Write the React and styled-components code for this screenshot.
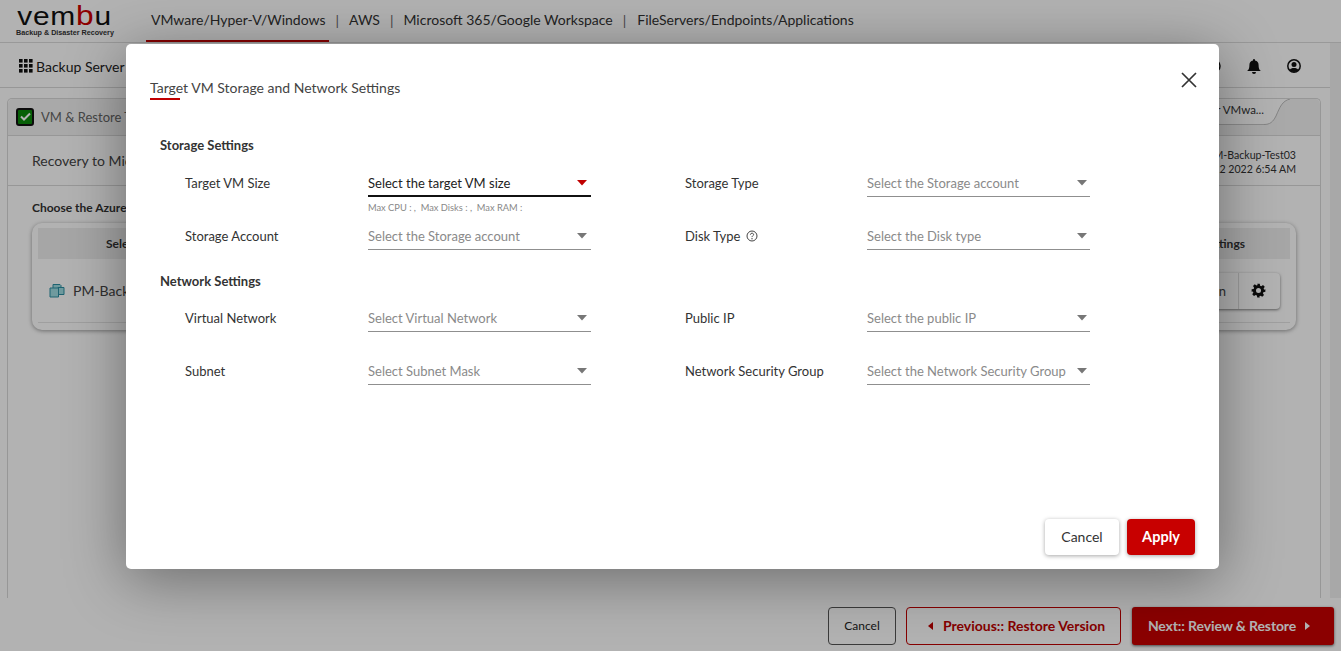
import React from "react";
import styled, { createGlobalStyle } from "styled-components";

const Global = createGlobalStyle`
  html, body { margin: 0; padding: 0; height: 100%; }
  body { font-family: Lato, "Open Sans", sans-serif; color: #333; background: #fff; overflow: hidden; }
  * { box-sizing: border-box; }
`;

const Page = styled.div`
  position: relative;
  width: 1341px;
  height: 651px;
  overflow: hidden;
  background: #fff;
  display: flex;
  flex-direction: column;
`;
const Header = styled.header`
  height: 43px;
  flex: none;
  display: flex;
  align-items: stretch;
  border-bottom: 1px solid #dcdcdc;
  padding-left: 16px;
`;
const Logo = styled.div`
  width: 130px;
  flex: none;
  display: flex;
  flex-direction: column;
`;
const LogoWord = styled.div`
  font-family: "Liberation Sans", Arial, sans-serif;
  font-weight: 400;
  font-size: 26.5px;
  line-height: 32px;
  letter-spacing: 0.7px;
  height: 28px;
  padding-left: 1px;
  color: #111;
  transform: scaleX(1.13);
  transform-origin: left center;
  span { color: #c00; font-size: 28px; }
`;
const LogoTag = styled.div`
  font-family: "Liberation Sans", sans-serif;
  font-weight: 700;
  font-size: 7.2px;
  line-height: 9px;
  color: #333;
  white-space: nowrap;
`;
const TopNav = styled.nav`
  display: flex;
  align-items: center;
  font-size: 14px;
  color: #333;
  height: 42px;
`;
const TopLink = styled.a`
  height: 42px;
  line-height: 40px;
  padding: ${(p) => (p.$active ? "0 3px 0 5px" : "0 5px")};
  white-space: nowrap;
  border-bottom: ${(p) => (p.$active ? "2px solid #c00000" : "2px solid transparent")};
`;
const Sep = styled.span`
  color: #666;
  padding: 0 ${(p) => p.$right || 5}px 0 ${(p) => p.$left || 5}px;
  margin-top: -2px;
`;
const Main = styled.div`
  height: 555px;
  flex: none;
  display: flex;
`;
const MainColumn = styled.div`
  width: 1330px;
  flex: none;
  display: flex;
  flex-direction: column;
`;
const ScrollTrack = styled.div`
  flex: 1;
  background: #f1f1f1;
`;
const SubBar = styled.div`
  height: 45px;
  flex: none;
  display: flex;
  align-items: center;
  justify-content: space-between;
  padding: 2px 29px 0 19px;
  border-bottom: 1px solid #d8d8d8;
`;
const Crumb = styled.div`
  display: flex;
  align-items: center;
  gap: 3px;
  font-size: 14px;
  color: #222;
`;
const SubIcons = styled.div`
  display: flex;
  align-items: center;
  gap: 26px;
  color: #111;
`;
const Panel = styled.section`
  margin: 10px 0 0 7px;
  width: 1314px;
  flex: 1;
  border: 1px solid #d8d8d8;
  border-bottom: none;
  border-radius: 5px 5px 0 0;
  display: flex;
  flex-direction: column;
`;
const TabRow = styled.div`
  height: 37px;
  flex: none;
  display: flex;
  align-items: center;
  justify-content: space-between;
  padding: 0 0 1px 8px;
  background: #f3f3f3;
  border-bottom: 1px solid #d8d8d8;
  border-radius: 5px 5px 0 0;
`;
const TabLabel = styled.div`
  display: flex;
  align-items: center;
  gap: 7px;
  font-size: 13px;
  color: #666;
`;
const Check = styled.span`
  width: 18px;
  height: 18px;
  border: 2px solid #111;
  border-radius: 3px;
  background: #0b8a0b;
  display: flex;
  align-items: center;
  justify-content: center;
`;
const TabEnd = styled.div`
  align-self: flex-start;
  height: 26px;
  margin-right: 30px;
  display: flex;
  align-items: flex-start;
`;
const TabText = styled.div`
  height: 26px;
  width: 110px;
  background: #fff;
  border-bottom: 1px solid #c8c8c8;
  font-size: 11.5px;
  font-weight: 400;
  line-height: 21px;
  text-align: right;
  color: #333;
  white-space: nowrap;
`;
const InfoRow = styled.div`
  height: 50px;
  flex: none;
  display: flex;
  align-items: center;
  justify-content: space-between;
  padding: 0 24px 0 24px;
  border-bottom: 1px solid #d8d8d8;
  font-size: 14px;
  color: #444;
`;
const RecoveryText = styled.span`
  margin-top: -1px;
`;
const InfoMeta = styled.div`
  font-size: 10.6px;
  line-height: 14px;
  padding-top: 3px;
  color: #333;
  text-align: right;
`;
const Content = styled.div`
  padding: 14px 24px 0;
`;
const ChooseTitle = styled.div`
  font-size: 12px;
  font-weight: 700;
  line-height: 16px;
  color: #333;
`;
const TableCard = styled.div`
  margin-top: 7px;
  height: 107px;
  width: 1264px;
  background: #fff;
  border-radius: 10px;
  box-shadow: 0 1px 4px rgba(0, 0, 0, 0.4);
  padding: 5px 6px 0;
`;
const TableHead = styled.div`
  height: 31px;
  background: #eeeeee;
  display: flex;
  align-items: center;
  justify-content: space-between;
  padding: 0 45px 0 68px;
  font-size: 12px;
  font-weight: 700;
  color: #333;
`;
const TableRow = styled.div`
  height: 64px;
  display: flex;
  align-items: center;
  justify-content: space-between;
  padding: 0 10px 0 11px;
  border-bottom: 1px solid #e4e4e4;
  font-size: 14px;
  color: #444;
`;
const RowName = styled.div`
  display: flex;
  align-items: center;
  gap: 8px;
`;
const RowActions = styled.div`
  width: 100px;
  height: 36px;
  display: flex;
  align-items: center;
  justify-content: flex-end;
  gap: 12px;
  border-radius: 4px;
  box-shadow: 0 1px 3px rgba(0, 0, 0, 0.5);
  font-size: 13px;
`;
const GearCell = styled.span`
  width: 42px;
  height: 36px;
  padding-right: 3px;
  border-left: 1px solid #ddd;
  display: flex;
  align-items: center;
  justify-content: center;
`;
const FooterBar = styled.div`
  flex: 1;
  background: #fff;
  display: flex;
  align-items: center;
  justify-content: flex-end;
  gap: 10px;
  padding: 2px 7px 0 0;
`;
const FootCancel = styled.button`
  width: 68px;
  height: 38px;
  background: transparent;
  border: 1px solid #555;
  border-radius: 4px;
  font: 400 12px Lato, sans-serif;
  color: #222;
`;
const FootPrev = styled.button`
  width: 215px;
  height: 38px;
  margin-right: 1px;
  padding: 0 0 0 6px;
  background: transparent;
  border: 1px solid #c00000;
  border-radius: 4px;
  font: 700 14px Lato, sans-serif;
  color: #c00000;
  display: flex;
  align-items: center;
  justify-content: center;
  gap: 10px;
`;
const FootNext = styled.button`
  width: 202px;
  height: 38px;
  padding: 0 8px 0 0;
  background: #c80000;
  border: none;
  border-radius: 3px;
  box-shadow: 0 1px 3px rgba(0, 0, 0, 0.6);
  font: 700 14px Lato, sans-serif;
  letter-spacing: -0.12px;
  color: #fff;
  display: flex;
  align-items: center;
  justify-content: center;
  gap: 9px;
`;
const Overlay = styled.div`
  position: absolute;
  inset: 0;
  background: rgba(0, 0, 0, 0.3);
`;
const Modal = styled.div`
  position: absolute;
  left: 126px;
  top: 44px;
  width: 1093px;
  height: 525px;
  background: #fff;
  border-radius: 5px;
  box-shadow: 0 10px 60px rgba(0, 0, 0, 0.4);
  padding: 35px 24px 14px;
  display: flex;
  flex-direction: column;
`;
const ModalHead = styled.div`
  display: flex;
  justify-content: space-between;
  align-items: flex-start;
  height: 45px;
  flex: none;
`;
const ModalTitle = styled.h2`
  margin: 0;
  font-size: 14px;
  font-weight: 400;
  line-height: 18px;
  color: #444;
  position: relative;
  &::after {
    content: "";
    position: absolute;
    left: 0;
    top: 19px;
    width: 30px;
    height: 2px;
    background: #c00000;
  }
`;
const Close = styled.button`
  background: none;
  border: none;
  padding: 0;
  margin: -9px -4px 0 0;
  width: 20px;
  height: 20px;
  color: #333;
`;
const Body = styled.div`
  flex: 1;
  padding-left: 10px;
  padding-top: 13px;
`;
const SectionTitle = styled.div`
  font-size: 13px;
  font-weight: 700;
  line-height: 17px;
  color: #333;
`;
const Grid = styled.div`
  display: grid;
  grid-template-columns: 183px 223px 94px 182px 223px;
  padding-left: 25px;
  margin-top: ${(p) => p.$top}px;
`;
const Label = styled.div`
  font-size: 13px;
  line-height: 28px;
  color: #333;
  height: ${(p) => p.$h}px;
  display: flex;
  align-items: flex-start;
  gap: 6px;
`;
const SelectWrap = styled.div`
  height: ${(p) => p.$h}px;
`;
const SelectBox = styled.div`
  height: 28px;
  display: flex;
  align-items: center;
  justify-content: space-between;
  font-size: 13px;
  color: ${(p) => (p.$active ? "#222" : "#8a8a8a")};
  border-bottom: ${(p) => (p.$active ? "2px solid #111" : "1px solid #8f8f8f")};
  padding: ${(p) => (p.$active ? "1px" : "0")} ${(p) => (p.$end ? 3 : 4)}px 0 0;
  white-space: nowrap;
  svg { flex: none; }
`;
const Hint = styled.div`
  font-size: 9.3px;
  line-height: 12px;
  margin-top: 5px;
  color: #888;
`;
const ColGap = styled.div``;
const ModalFoot = styled.div`
  display: flex;
  justify-content: flex-end;
  gap: 8px;
`;
const ModalCancel = styled.button`
  width: 74px;
  height: 36px;
  padding-bottom: 2px;
  background: #fff;
  border: none;
  border-radius: 4px;
  box-shadow: 0 1px 4px rgba(0, 0, 0, 0.35);
  font: 400 14px Lato, sans-serif;
  color: #333;
`;
const ModalApply = styled.button`
  width: 68px;
  height: 36px;
  padding-bottom: 2px;
  background: #c80000;
  border: none;
  border-radius: 4px;
  box-shadow: 0 1px 4px rgba(0, 0, 0, 0.35);
  font: 700 14.5px Lato, sans-serif;
  color: #fff;
`;

const Caret = ({ color = "#777" }) => (
  <svg width="10" height="6" viewBox="0 0 10 6"><path d="M0 0h10L5 5.500z" fill={color} /></svg>
);
const Arrow = ({ dir, color }) => (
  <svg width="5" height="8" viewBox="0 0 5 8">
    <path d={dir === "l" ? "M5 0v8L0 4z" : "M0 0v8l5-4z"} fill={color} />
  </svg>
);
const Bell = () => (
  <svg width="14" height="15" viewBox="0 0 14 15" fill="#111">
    <path d="M7 0a1 1 0 0 1 1 1v.6A4.600 4.600 0 0 1 11.600 6c0 4 1.200 5 2.200 6H.2c1-1 2.200-2 2.200-6A4.600 4.600 0 0 1 6 1.600V1a1 1 0 0 1 1-1zM5 13h4a2 2 0 0 1-4 0z" />
  </svg>
);
const User = () => (
  <svg width="14" height="14" viewBox="0 0 14 14">
    <circle cx="7" cy="7" r="6.200" fill="none" stroke="#111" strokeWidth="1.500" />
    <circle cx="7" cy="5.600" r="2.500" fill="#111" />
    <path d="M2.600 11.200C3.500 9.400 5 9 7 9s3.500.4 4.400 2.200A6 6 0 0 1 7 13a6 6 0 0 1-4.400-1.800z" fill="#111" />
  </svg>
);
const Ring = () => (
  <svg width="14" height="14" viewBox="0 0 14 14">
    <circle cx="7" cy="7" r="6" fill="none" stroke="#111" strokeWidth="1.500" />
  </svg>
);
const Apps = () => (
  <svg width="14" height="14" viewBox="0 0 14 14" fill="#111">
    {[0, 5, 10].flatMap((x) => [0, 5, 10].map((y) => <rect key={`${x}-${y}`} x={x} y={y} width="3.600" height="3.600" />))}
  </svg>
);
const Gear = () => (
  <svg width="15" height="15" viewBox="0 0 24 24" fill="#111">
    <path fillRule="evenodd" d="M10 1h4l.6 3.200 1.900.8 2.700-1.800 2.800 2.800-1.800 2.700.8 1.900L23 10v4l-3.200.6-.8 1.900 1.800 2.700-2.800 2.800-2.700-1.800-1.900.8L14 23h-4l-.6-3.200-1.900-.8-2.700 1.800-2.800-2.800 1.800-2.700-.8-1.900L1 14v-4l3.200-.6.8-1.900-1.800-2.700 2.800-2.800 2.700 1.800 1.900-.8zM12 8a4 4 0 1 0 0 8 4 4 0 0 0 0-8z" />
  </svg>
);
const VmIcon = () => (
  <svg width="16" height="15" viewBox="0 0 16 15" fill="#9fdde2" stroke="#2c8fa3" strokeWidth="1">
    <path d="M4 1.500h7l1 1v3H4z" />
    <path d="M9 4.500h6v7H9z" />
    <path d="M1 5h8.500v9H1z" />
  </svg>
);
const Help = () => (
  <svg width="12" height="12" viewBox="0 0 12 12" style={{ marginTop: 8 }}>
    <circle cx="6" cy="6" r="5" fill="none" stroke="#444" strokeWidth="1" />
    <path d="M4.400 4.700c0-2 3.200-2 3.200-.1 0 1.100-1.600 1.200-1.600 2.500" fill="none" stroke="#444" strokeWidth="1" />
    <circle cx="6" cy="8.700" r=".7" fill="#444" />
  </svg>
);
const TabCurve = () => (
  <svg width="26" height="26" viewBox="0 0 26 26" style={{ display: "block" }}>
    <path d="M0 0H26C18 2 16 8 12 17C9 23 6 25.500 0 25.500Z" fill="#fff" />
    <path d="M26 0C18 2 16 8 12 17C9 23 6 25.500 0 25.500" fill="none" stroke="#bdbdbd" />
  </svg>
);

const Select = ({ text, active, h, end }) => (
  <SelectWrap $h={h}>
    <SelectBox $active={active} $end={end}>
      <span>{text}</span>
      <Caret color={active ? "#c00000" : "#777"} />
    </SelectBox>
    {active && <Hint>Max CPU : ,&nbsp; Max Disks : ,&nbsp; Max RAM :</Hint>}
  </SelectWrap>
);

const Row = ({ h, left, leftText, right, rightText, rightHelp, active }) => (
  <>
    <Label $h={h}>{left}</Label>
    <Select text={leftText} active={active} h={h} />
    <ColGap />
    <Label $h={h}>{right}{rightHelp && <Help />}</Label>
    <Select text={rightText} h={h} end />
  </>
);

export default function App() {
  return (
    <Page>
      <Global />
      <Header>
        <Logo>
          <LogoWord>vem<span>b</span>u</LogoWord>
          <LogoTag>Backup &amp; Disaster Recovery</LogoTag>
        </Logo>
        <TopNav>
          <TopLink $active>VMware/Hyper-V/Windows</TopLink>
          <Sep $left={7}>|</Sep>
          <TopLink>AWS</TopLink>
          <Sep>|</Sep>
          <TopLink>Microsoft 365/Google Workspace</TopLink>
          <Sep $right={6}>|</Sep>
          <TopLink>FileServers/Endpoints/Applications</TopLink>
        </TopNav>
      </Header>
      <Main>
        <MainColumn>
          <SubBar>
            <Crumb><Apps />Backup Server</Crumb>
            <SubIcons><Ring /><Bell /><User /></SubIcons>
          </SubBar>
          <Panel>
            <TabRow>
              <TabLabel>
                <Check>
                  <svg width="11" height="9" viewBox="0 0 11 9"><path d="M1 4.500 4 7.500 10 1.500" fill="none" stroke="#fff" strokeWidth="2" /></svg>
                </Check>
                VM &amp; Restore Type
              </TabLabel>
              <TabEnd>
                <TabText>Recover VMwa...</TabText>
                <TabCurve />
              </TabEnd>
            </TabRow>
            <InfoRow>
              <RecoveryText>Recovery to Microsoft Azure</RecoveryText>
              <InfoMeta>PM-Backup-Test03<br />Dec 12 2022 6:54 AM</InfoMeta>
            </InfoRow>
            <Content>
              <ChooseTitle>Choose the Azure VM settings</ChooseTitle>
              <TableCard>
                <TableHead><span>Selected VM</span><span>Settings</span></TableHead>
                <TableRow>
                  <RowName><VmIcon />PM-Backup</RowName>
                  <RowActions>n<GearCell><Gear /></GearCell></RowActions>
                </TableRow>
              </TableCard>
            </Content>
          </Panel>
        </MainColumn>
        <ScrollTrack />
      </Main>
      <FooterBar>
        <FootCancel>Cancel</FootCancel>
        <FootPrev><Arrow dir="l" color="#c00000" />Previous:: Restore Version</FootPrev>
        <FootNext>Next:: Review &amp; Restore<Arrow dir="r" color="#fff" /></FootNext>
      </FooterBar>
      <Overlay>
        <Modal>
          <ModalHead>
            <ModalTitle>Target VM Storage and Network Settings</ModalTitle>
            <Close aria-label="Close">
              <svg width="20" height="20" viewBox="0 0 20 20"><path d="M3 3 17 17M17 3 3 17" stroke="#333" strokeWidth="1.700" /></svg>
            </Close>
          </ModalHead>
          <Body>
            <SectionTitle>Storage Settings</SectionTitle>
            <Grid $top={15}>
              <Row h={53} left="Target VM Size" leftText="Select the target VM size" right="Storage Type" rightText="Select the Storage account" active />
              <Row h={51} left="Storage Account" leftText="Select the Storage account" right="Disk Type" rightText="Select the Disk type" rightHelp />
            </Grid>
            <SectionTitle>Network Settings</SectionTitle>
            <Grid $top={14}>
              <Row h={53} left="Virtual Network" leftText="Select Virtual Network" right="Public IP" rightText="Select the public IP" />
              <Row h={28} left="Subnet" leftText="Select Subnet Mask" right="Network Security Group" rightText="Select the Network Security Group" />
            </Grid>
          </Body>
          <ModalFoot>
            <ModalCancel>Cancel</ModalCancel>
            <ModalApply>Apply</ModalApply>
          </ModalFoot>
        </Modal>
      </Overlay>
    </Page>
  );
}
